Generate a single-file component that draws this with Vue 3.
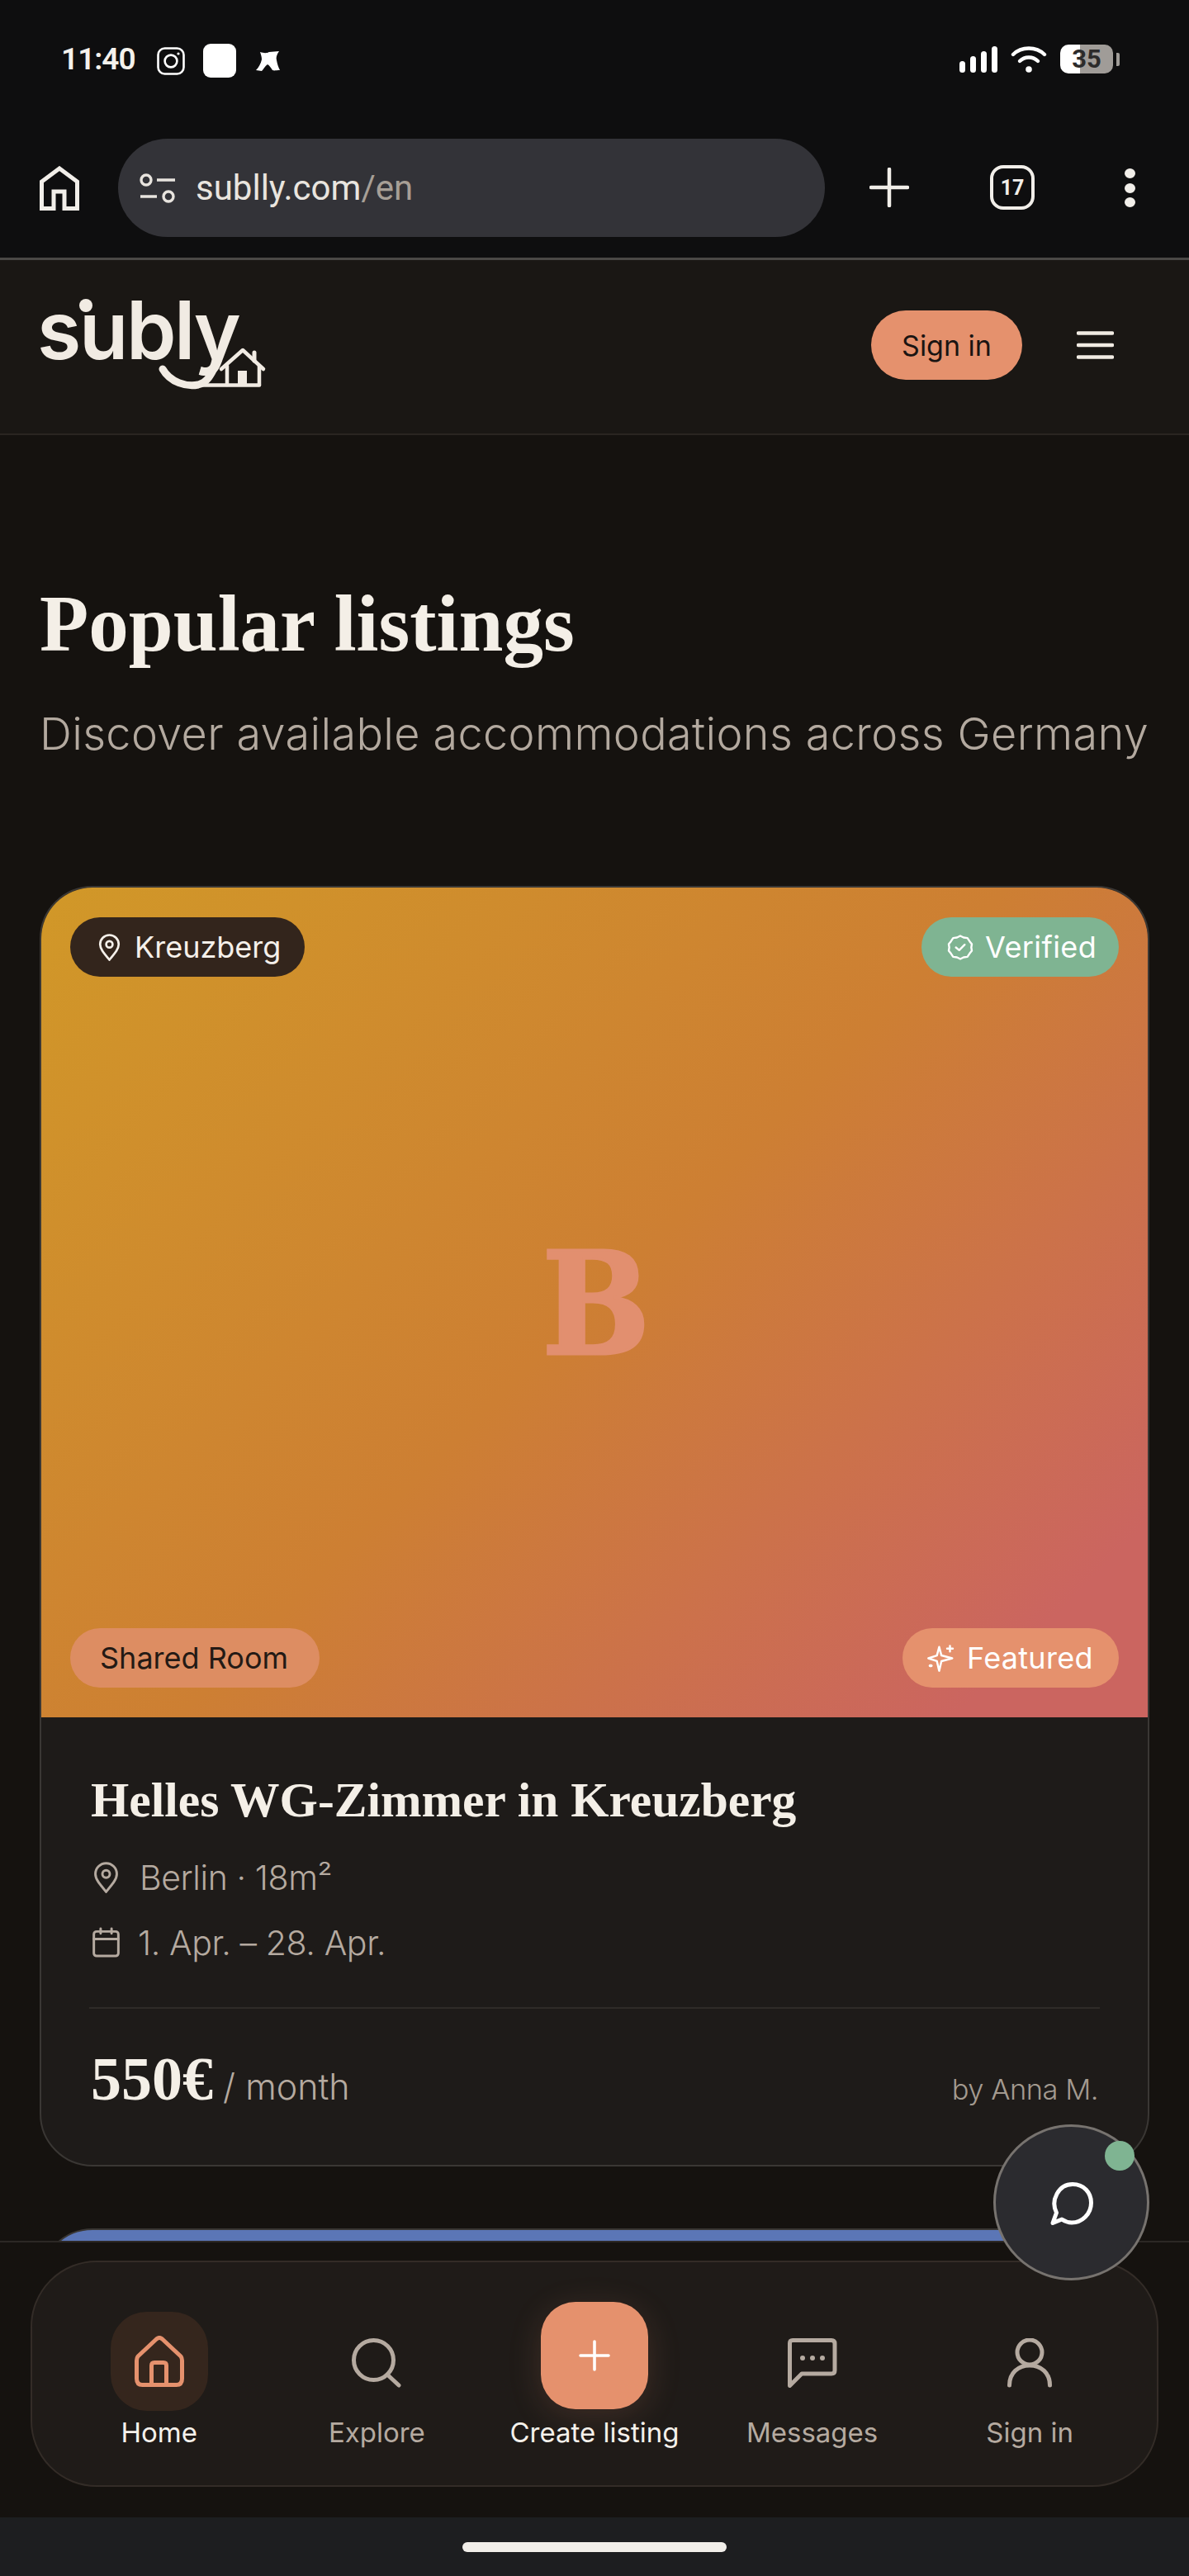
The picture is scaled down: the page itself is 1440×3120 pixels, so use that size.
<script setup>
const navItems = [
  { label: 'Home', key: 'home', active: true },
  { label: 'Explore', key: 'explore' },
  { label: 'Create listing', key: 'create', create: true },
  { label: 'Messages', key: 'messages' },
  { label: 'Sign in', key: 'user' },
]
</script>

<template>
  <div class="screen">
    <header class="statusbar">
      <div class="status-left">
        <span class="clock">11:40</span>
        <svg class="ig" viewBox="0 0 34 34" fill="none" stroke="#fff" stroke-width="2.6">
          <rect x="1.5" y="1.5" width="31" height="31" rx="8" />
          <circle cx="17" cy="17" r="7.4" />
          <circle cx="26" cy="8" r="1.6" fill="#fff" stroke="none" />
        </svg>
        <span class="white-square"></span>
        <svg class="moth" viewBox="0 0 29 24" fill="#fff">
          <path d="M5 1 C9 2 12 3 16 1 L28 0 C25 4 24 8 25 11 C26 16 27 19 29 23 C25 23 22 24 20 23 C18 20 16 17 14 16 C11 18 9 22 7 24 L0 23 C3 20 6 15 7 10 C7 7 6 4 5 1 Z" />
        </svg>
      </div>
      <div class="status-right">
        <span class="signal"><i></i><i></i><i></i><i></i></span>
        <svg class="wifi" viewBox="0 0 44 32" fill="none" stroke="#fff" stroke-width="4.4" stroke-linecap="round">
          <path d="M3 10 C13 0 31 0 41 10" />
          <path d="M11 18 C17 12 27 12 33 18" />
          <circle cx="22" cy="28" r="3.8" fill="#fff" stroke="none" />
        </svg>
        <span class="battery"><span class="battery-num">35</span></span>
        <span class="battery-cap"></span>
      </div>
    </header>

    <div class="browserbar">
      <svg class="b-home" viewBox="0 0 48 54" fill="none" stroke="#f1eee9" stroke-width="5">
        <path d="M2.5 51.500 V19 L24 3 L45.500 19 V51.500 H30 V31 H17 V51.500 Z" />
      </svg>
      <div class="urlbar">
        <svg class="tune" viewBox="0 0 44 36" fill="none" stroke="#e8e4de" stroke-width="3.4">
          <circle cx="8" cy="8" r="6" />
          <path d="M21 8 H43 M1 28 H21" />
          <circle cx="35" cy="28" r="6" />
        </svg>
        <span class="url">sublly.com<span class="url-dim">/en</span></span>
      </div>
      <svg class="b-plus" viewBox="0 0 48 48" stroke="#f1eee9" stroke-width="4.5" stroke-linecap="round">
        <path d="M24 2 V46 M2 24 H46" />
      </svg>
      <span class="tabs">17</span>
      <span class="dots"><i></i><i></i><i></i></span>
    </div>

    <div class="page">
      <nav class="topnav">
        <div class="logo">
          <span class="logo-text">subly</span>
          <svg class="logo-art" viewBox="0 0 300 130" fill="none" stroke="#f1ebe3" stroke-linecap="round" stroke-linejoin="round">
            <circle cx="56" cy="17" r="8" fill="#f1ebe3" stroke="none" />
            <path d="M149 94 C158 110 178 116 192 113 C204 110 208 100 216 84" stroke-width="9" />
            <path d="M192 113.500 H266" stroke-width="4.500" />
            <path d="M220 94 L246 71 L271 94" stroke-width="4.500" />
            <path d="M227 90 V113 M266 90 V113" stroke-width="4.500" />
            <path d="M260 74 V84" stroke-width="5" />
            <rect x="240" y="96" width="11" height="17" fill="#f1ebe3" stroke="none" />
          </svg>
        </div>
        <div class="nav-right">
          <button class="signin">Sign in</button>
          <svg class="burger" viewBox="0 0 45 34" stroke="#f1ebe3" stroke-width="4.500" stroke-linecap="round">
            <path d="M2 2.500 H43 M2 17 H43 M2 31.500 H43" />
          </svg>
        </div>
      </nav>

      <main class="content">
        <h1 class="title">Popular listings</h1>
        <p class="subtitle">Discover available accommodations across Germany</p>

        <article class="card">
          <div class="hero">
            <span class="chip chip-loc">
              <svg viewBox="3 1 18 22" fill="none" stroke="#f5f0ea" stroke-width="1.800"><path d="M12 22 C7 16 4.500 13 4.500 9.500 A7.500 7.500 0 0 1 19.500 9.500 C19.500 13 17 16 12 22 Z" /><circle cx="12" cy="9.500" r="2.600" /></svg>
              Kreuzberg
            </span>
            <span class="chip chip-verified">
              <svg viewBox="0 0 24 24" fill="none" stroke="#fff" stroke-width="1.800" stroke-linecap="round" stroke-linejoin="round"><path d="M12 1.500 L15 3 L18.500 3.500 L20.500 6.500 L22.500 9 L22 12 L22.500 15 L20.500 17.500 L18.500 20.500 L15 21 L12 22.500 L9 21 L5.500 20.500 L3.500 17.500 L1.500 15 L2 12 L1.500 9 L3.500 6.500 L5.500 3.500 L9 3 Z" /><path d="M8 12 L11 14.500 L16 9.500" /></svg>
              Verified
            </span>
            <span class="initial">B</span>
            <span class="chip chip-type">Shared Room</span>
            <span class="chip chip-featured">
              <svg viewBox="0 0 24 24" fill="none" stroke="#fff" stroke-width="1.800" stroke-linecap="round" stroke-linejoin="round"><path d="M10.500 2 L12.500 9.500 L22 12 L12.500 14.500 L10.500 23 L8.500 14.500 L1 12 L8.500 9.500 Z" /><path d="M20 1 V6 M17.500 3.500 H22.500" /><path d="M2.500 18.500 H3.500" stroke-width="2.500" /></svg>
              Featured
            </span>
          </div>
          <div class="body">
            <h2 class="listing-title">Helles WG-Zimmer in Kreuzberg</h2>
            <div class="meta">
              <svg viewBox="3 1 18 22" fill="none" stroke="#b5aaa0" stroke-width="1.700"><path d="M12 22 C7 16 4.500 13 4.500 9.500 A7.500 7.500 0 0 1 19.500 9.500 C19.500 13 17 16 12 22 Z" /><circle cx="12" cy="9.500" r="2.600" /></svg>
              <span>Berlin · 18m²</span>
            </div>
            <div class="meta meta-date">
              <svg viewBox="2 1 20 21.500" fill="none" stroke="#b5aaa0" stroke-width="1.800" stroke-linecap="round"><rect x="3" y="3.500" width="18" height="18" rx="2" /><path d="M3 9 H21 M8 1.500 V5 M16 1.500 V5" /></svg>
              <span>1. Apr. – 28. Apr.</span>
            </div>
            <div class="divider"></div>
            <div class="price-row">
              <div><span class="price">550€</span><span class="per"> / month</span></div>
              <span class="by">by Anna M.</span>
            </div>
          </div>
        </article>

        <div class="card-next"></div>
      </main>

      <div class="dock">
        <div class="bottomnav">
          <div v-for="item in navItems" :key="item.key" class="nav-item" :class="{ on: item.active || item.create }">
            <span v-if="item.create" class="plus-btn">
              <svg viewBox="0 0 40 40" stroke="#fff" stroke-width="3.6" stroke-linecap="round"><path d="M20 3 V37 M3 20 H37" /></svg>
            </span>
            <span v-else class="nav-icon" :class="{ 'nav-icon-on': item.active }">
              <svg v-if="item.key === 'home'" class="ic-home" viewBox="0 0 60 62" fill="none" stroke="#e5916d" stroke-width="5" stroke-linejoin="round">
                <path d="M4 25 L26.500 4 Q30 1 33.500 4 L56 25 Q57.500 27 57.500 30 V52 Q57.500 59.500 50.500 59.500 H9.500 Q2.500 59.500 2.500 52 V30 Q2.500 27 4 25 Z" />
                <path d="M20.500 59 V36 Q20.500 32.500 24 32.500 H35 Q38.500 32.500 38.500 36 V59" />
              </svg>
              <svg v-else-if="item.key === 'explore'" class="ic-search" viewBox="0 0 60 60" fill="none" stroke="#b5aaa0" stroke-width="5" stroke-linecap="round">
                <circle cx="26.500" cy="26.500" r="24" />
                <path d="M43 44 L57 57" />
              </svg>
              <svg v-else-if="item.key === 'messages'" class="ic-msg" viewBox="0 0 60 60" fill="none" stroke="#b5aaa0" stroke-width="5" stroke-linejoin="round">
                <path d="M2.500 6 Q2.500 2.500 6 2.500 H53 Q57 2.500 57 6.500 V39 Q57 43 53 43 H17 L2.500 57.500 Z" />
                <circle cx="18" cy="24" r="3" fill="#b5aaa0" stroke="none" />
                <circle cx="30" cy="24" r="3" fill="#b5aaa0" stroke="none" />
                <circle cx="42" cy="24" r="3" fill="#b5aaa0" stroke="none" />
              </svg>
              <svg v-else class="ic-user" viewBox="0 0 54 60" fill="none" stroke="#b5aaa0" stroke-width="5" stroke-linecap="round">
                <circle cx="27" cy="17" r="15" />
                <path d="M2.500 57 C2.500 42 13 33 27 33 C41 33 51.500 42 51.500 57" />
              </svg>
            </span>
            <span class="nav-label">{{ item.label }}</span>
          </div>
        </div>
      </div>

      <div class="fab">
        <svg viewBox="0 0 52 52" fill="none" stroke="#fff" stroke-width="5" stroke-linejoin="round">
          <path d="M3 49.500 L7.500 37 C0 22 10 2.500 27 2.500 C41 2.500 49.500 13 49.500 25 C49.500 39 38 49 26 49 C21 49 17 47 14 45 Z" />
        </svg>
        <span class="online"></span>
      </div>

      <div class="homebar"><span></span></div>
    </div>
  </div>
</template>

<style>
html, body { margin: 0; background: #0e0e0f; }
</style>

<style scoped>
.screen {
  width: 1440px;
  height: 3120px;
  display: flex;
  flex-direction: column;
  overflow: hidden;
  background: #0e0e0f;
  font-family: "Inter", "Liberation Sans", sans-serif;
  color: #f4f0ea;
}
.statusbar {
  height: 144px;
  padding: 53px 84px 0 74px;
  box-sizing: border-box;
  display: flex;
  justify-content: space-between;
  align-items: flex-start;
}
.status-left { display: flex; align-items: center; height: 41px; }
.clock { font-family: "Roboto", sans-serif; font-size: 37px; font-weight: 600; color: #f4f1ec; letter-spacing: -1px; width: 116px; line-height: 36px; margin-top: -4px; }
.ig { width: 34px; height: 34px; }
.white-square { width: 40px; height: 41px; border-radius: 9px; background: #fff; margin-left: 22px; }
.moth { width: 29px; height: 24px; margin-left: 24px; }
.status-right { display: flex; align-items: center; height: 37px; }
.signal { display: flex; align-items: flex-end; gap: 6px; height: 32px; margin-right: 16px; }
.signal i { width: 7px; border-radius: 4px; background: #fff; }
.signal i:nth-child(1) { height: 14px; }
.signal i:nth-child(2) { height: 20px; }
.signal i:nth-child(3) { height: 26px; }
.signal i:nth-child(4) { height: 32px; }
.wifi { width: 44px; height: 32px; margin-right: 16px; }
.battery {
  width: 64px; height: 35px; border-radius: 10px;
  background: linear-gradient(90deg, #fff 0 38%, #a09c98 38% 100%);
  display: flex; align-items: center; justify-content: center;
}
.battery-num { font-family: "Roboto", sans-serif; font-size: 31px; font-weight: 700; color: #2c2b2b; line-height: 1; }
.battery-cap { width: 4px; height: 16px; margin-left: 4px; background: #a09c98; border-radius: 0 2px 2px 0; }

.browserbar {
  height: 168px;
  padding: 24px 32px 0 48px;
  box-sizing: border-box;
  display: flex;
  align-items: flex-start;
}
.b-home { width: 48px; height: 54px; margin: 33px 47px 0 0; flex: none; }
.urlbar {
  width: 856px; height: 119px; flex: none;
  border-radius: 60px; background: #333338;
  display: flex; align-items: center; padding-left: 26px; box-sizing: border-box; gap: 24px;
}
.tune { width: 44px; height: 36px; }
.url { font-family: "Roboto", sans-serif; font-size: 42px; color: #e9e5df; }
.url-dim { color: #a79f96; }
.b-plus { width: 48px; height: 48px; margin: 35px 0 0 54px; flex: none; }
.tabs {
  width: 54px; height: 54px; margin: 32px 0 0 98px; box-sizing: border-box; flex: none;
  border: 4px solid #f1eee9; border-radius: 16px;
  font-family: "Roboto", sans-serif; font-size: 25px; font-weight: 700; color: #f1eee9;
  display: flex; align-items: center; justify-content: center;
}
.dots { display: flex; flex-direction: column; gap: 5.5px; margin: 36px 0 0 109px; }
.dots i { width: 13px; height: 12px; border-radius: 50%; background: #f1eee9; }

.page {
  position: relative;
  flex: 1;
  min-height: 0;
  background: #15120f;
  border-top: 3px solid #4a4846;
}
.topnav {
  height: 212px;
  box-sizing: border-box;
  padding: 0 91px 4px 48px;
  display: flex;
  align-items: center;
  justify-content: space-between;
  background: #1a1714;
  border-bottom: 2px solid #2a2521;
}
.logo { position: relative; width: 300px; height: 130px; }
.logo-text { font-family: "Inter", sans-serif; font-size: 97px; font-weight: 600; letter-spacing: -2.4px; color: #f1ebe3; line-height: 97px; position: absolute; left: -3px; top: -2px; }
.logo-art { position: absolute; left: 0; top: 0; width: 300px; height: 130px; }
.nav-right { display: flex; align-items: center; gap: 66px; }
.signin {
  width: 183px; height: 84px; border: 0; border-radius: 42px; background: #e5916d;
  font-family: "Inter", sans-serif; font-size: 34px; color: #1a1412; padding: 0;
}
.burger { width: 45px; height: 34px; }

.content { padding: 174px 48px 0 48px; }
.title {
  margin: 0;
  font-family: "Liberation Serif", serif;
  font-size: 97px; font-weight: 700; line-height: 110px; color: #f4efe7;
}
.subtitle {
  margin: 44px 0 0;
  font-family: "Inter", sans-serif;
  font-size: 54px; font-weight: 300; line-height: 68px; color: #b3a99f;
  letter-spacing: 0.35px;
  white-space: nowrap;
}
.card {
  margin-top: 150px;
  width: 1344px;
  box-sizing: border-box;
  border-radius: 64px;
  overflow: hidden;
  border: 2px solid #3a3734;
  background: #1e1b19;
}
.hero {
  position: relative;
  height: 1005px;
  display: flex;
  align-items: center;
  justify-content: center;
  background: linear-gradient(135deg, #d19828 0%, #cd7f33 50%, #cb6560 90%);
}
.chip {
  position: absolute;
  height: 72px;
  display: flex;
  align-items: center;
  border-radius: 36px;
  box-sizing: border-box;
  font-size: 36px;
  white-space: nowrap;
}
.chip svg { height: 33px; flex: none; }
.chip-loc { left: 35px; top: 36px; width: 284px; padding-left: 34px; gap: 17px; background: #33251c; color: #f5f0ea; }
.chip-loc svg { width: 27px; }
.chip-verified { right: 35px; top: 36px; width: 239px; padding-left: 31px; gap: 14px; background: #7fb492; color: #fff; letter-spacing: 0.4px; }
.chip-verified svg { width: 32px; }
.chip-type { left: 35px; bottom: 36px; width: 302px; padding-left: 36px; background: #dd8d62; color: #241a15; }
.chip-featured { right: 35px; bottom: 36px; width: 262px; padding-left: 30px; gap: 15px; background: #e5916d; color: #fff; letter-spacing: 0.3px; }
.chip-featured svg { width: 33px; }
.initial {
  font-family: "DejaVu Serif", "Liberation Serif", serif;
  font-stretch: condensed;
  font-size: 172px; font-weight: 700; color: #e28f6f;
  -webkit-text-stroke: 3px #e28f6f;
  line-height: 1;
  margin: 4px 0 0 4px;
}
.body { padding: 65px 60px 0 60px; height: 542px; box-sizing: border-box; }
.listing-title {
  margin: 0;
  font-family: "Liberation Serif", serif;
  font-size: 59.5px; font-weight: 700; line-height: 70px; color: #f4efe7;
}
.meta { display: flex; align-items: center; gap: 24px; margin-top: 37px; font-size: 41px; font-weight: 300; letter-spacing: -0.4px; color: #b5aaa0; line-height: 44px; }
.meta svg { width: 33px; height: 38px; flex: none; margin-left: 2px; }
.meta-date { margin-top: 35px; gap: 22px; }
.divider { height: 2px; background: #2f2b28; margin: 56px -2px 0; }
.price-row { display: flex; justify-content: space-between; align-items: baseline; margin-top: 43px; }
.price { font-family: "Liberation Serif", serif; font-size: 74px; font-weight: 700; color: #f4efe7; }
.per { font-size: 43px; font-weight: 300; color: #b5aaa0; }
.by { font-size: 34.5px; font-weight: 300; letter-spacing: -0.5px; color: #a39a90; }
.card-next {
  margin-top: 75px;
  width: 1344px;
  height: 300px;
  box-sizing: border-box;
  border-radius: 64px 64px 0 0;
  background: #5b76b6;
  border: 2px solid #3a3734;
}

.dock {
  position: absolute;
  left: 0; right: 0; top: 2399px;
  height: 336px;
  box-sizing: border-box;
  padding: 22px 37px 0;
  background: #15120f;
  border-top: 2px solid #2c2825;
}
.bottomnav {
  height: 274px;
  box-sizing: border-box;
  border: 2px solid #332c27;
  border-radius: 80px;
  background: #1f1b18;
  display: grid;
  grid-template-columns: repeat(5, 1fr);
  padding: 0 22px;
}
.nav-item { display: flex; flex-direction: column; align-items: center; justify-content: flex-start; position: relative; }
.nav-icon { width: 118px; height: 120px; margin-top: 60px; display: flex; align-items: center; justify-content: center; border-radius: 44px; }
.ic-home { width: 60px; height: 62px; }
.ic-search { width: 60px; height: 60px; margin-top: 3px; }
.ic-msg { width: 60px; height: 60px; margin-top: 3px; }
.ic-user { width: 54px; height: 60px; margin-top: 3px; }
.nav-icon-on { background: #35261d; }
.plus-btn {
  width: 130px; height: 130px; margin: 48px 0 2px; border-radius: 42px;
  background: #e5916d; display: flex; align-items: center; justify-content: center;
  box-shadow: 0 8px 40px rgba(229, 145, 109, 0.16);
}
.plus-btn svg { width: 40px; height: 40px; }
.nav-label { font-size: 33px; font-weight: 400; color: #b5aaa0; line-height: 40px; margin-top: 6px; }
.nav-item.on .nav-label { color: #f5f1eb; }

.fab {
  position: absolute;
  left: 1203px; top: 2258px;
  width: 189px; height: 189px;
  box-sizing: border-box;
  border-radius: 50%;
  background: #2b2b2f;
  border: 3px solid #77736f;
  display: flex; align-items: center; justify-content: center;
}
.fab svg { width: 52px; height: 52px; margin-top: 2px; }
.online { position: absolute; right: 15px; top: 17px; width: 36px; height: 36px; border-radius: 50%; background: #7fb492; }

.homebar {
  position: absolute;
  left: 0; right: 0; bottom: 0;
  height: 71px;
  background: #1d1e20;
  display: flex; align-items: center; justify-content: center;
}
.homebar span { width: 320px; height: 12px; border-radius: 6px; background: #f1eee9; }
</style>
